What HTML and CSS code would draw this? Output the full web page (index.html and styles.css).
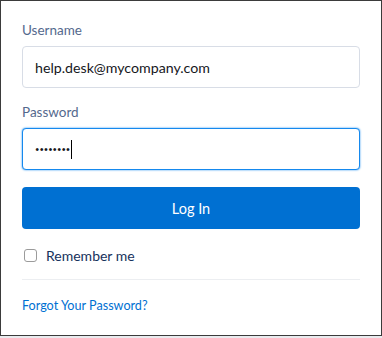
FILE: index.html
```html
<!DOCTYPE html>
<html lang="en">
<head>
    <meta charset="UTF-8">
    <meta name="viewport" content="width=device-width, initial-scale=1.0">
    <title>Login</title>
    <link rel="stylesheet" href="styles.css">
</head>
<body>
    <div class="card">
        <form class="login-form">
            <label class="field-label" for="username">Username</label>
            <input class="field-input" id="username" type="email" value="help.desk@mycompany.com">

            <label class="field-label second" for="password">Password</label>
            <div class="field-input focused">
                <span class="dots">••••••••</span><span class="caret"></span>
            </div>

            <button class="login-btn" type="button">Log In</button>

            <label class="remember">
                <span class="checkbox"></span>
                Remember me
            </label>

            <hr class="divider">

            <a class="forgot" href="#">Forgot Your Password?</a>
        </form>
    </div>
</body>
</html>
```

FILE: styles.css
```css
* {
    margin: 0;
    padding: 0;
    box-sizing: border-box;
}

body {
    font-family: 'Lato', sans-serif;
    background: #e9ebee;
    width: 382px;
    height: 338px;
}

.card {
    background: #fff;
    border: 1px solid #3b3b3b;
    height: 336px;
    padding: 20px 21px;
}

.login-form {
    display: flex;
    flex-direction: column;
}

.field-label {
    color: #54698d;
    font-size: 13.5px;
    line-height: 19px;
    margin-bottom: 6px;
}

.field-label.second {
    margin-top: 15px;
}

.field-input {
    height: 42px;
    border: 1px solid #d8dde6;
    border-radius: 4px;
    padding: 0 12px;
    font-family: inherit;
    font-size: 14.2px;
    color: #16181d;
    background: #fff;
    outline: none;
    display: flex;
    align-items: center;
}

.field-input.focused {
    border-color: #1589ee;
    box-shadow: 0 0 2px #1589ee;
}

.dots {
    font-size: 7.6px;
    color: #16181d;
}

.caret {
    display: inline-block;
    width: 1px;
    height: 19px;
    background: #000;
    margin-left: 1px;
}

.login-btn {
    margin-top: 17px;
    height: 42px;
    border: none;
    border-radius: 4px;
    background: #0070d2;
    color: #fff;
    font-family: inherit;
    font-size: 14.5px;
    cursor: pointer;
}

.remember {
    margin-top: 14px;
    height: 24px;
    display: flex;
    align-items: center;
    font-size: 14px;
    color: #16325c;
    padding-left: 2px;
}

.checkbox {
    width: 13px;
    height: 13px;
    border: 1px solid #9b9b9b;
    border-radius: 3px;
    margin-right: 9px;
}

.divider {
    border: none;
    border-top: 1px solid #eceef1;
    margin-top: 12px;
}

.forgot {
    margin-top: 16px;
    line-height: 20px;
    font-size: 12.6px;
    color: #0070d2;
    text-decoration: none;
    align-self: flex-start;
}
```
